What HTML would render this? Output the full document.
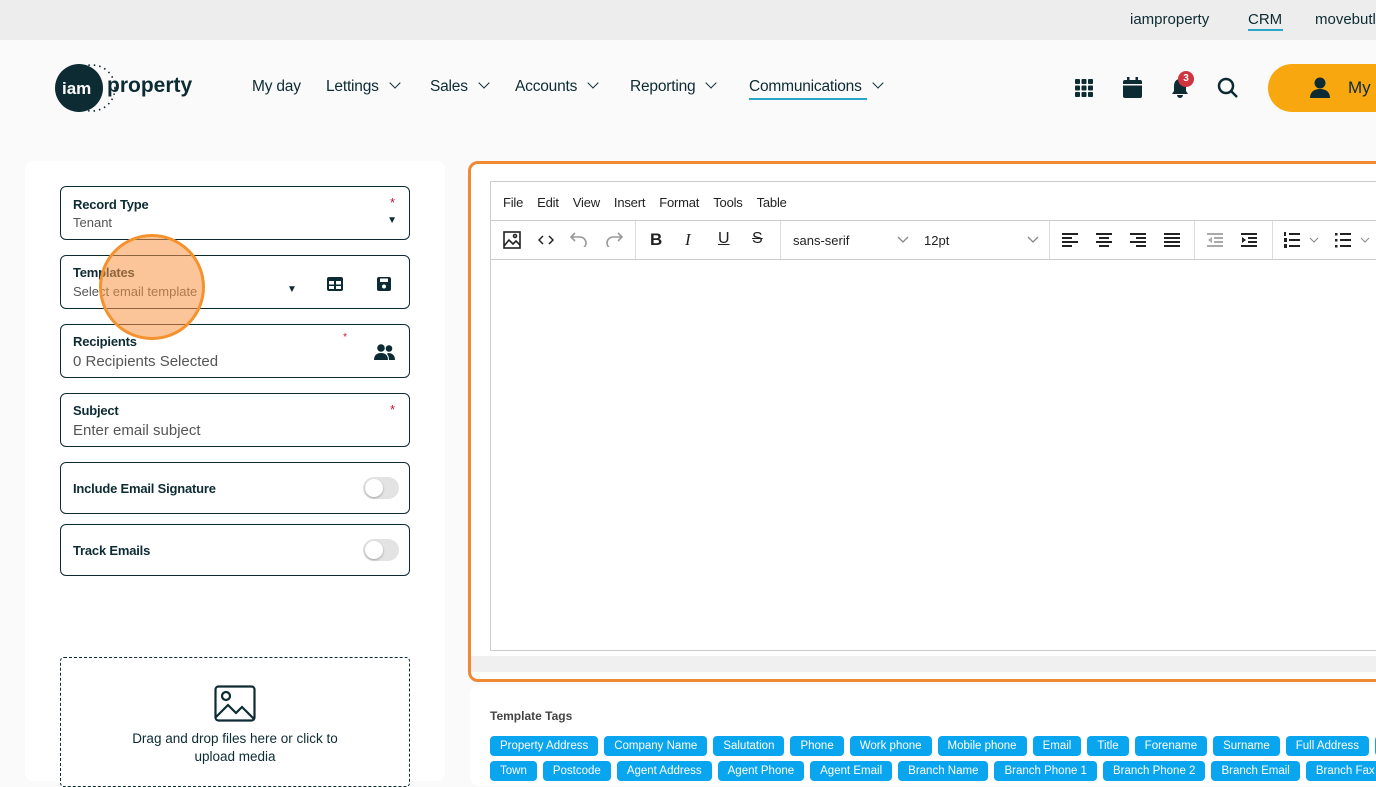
<!DOCTYPE html><html><head><meta charset="utf-8"><style>
*{box-sizing:border-box;margin:0;padding:0}
body{width:1376px;height:769px;overflow:hidden;background:#fafafa;font-family:"Liberation Sans",sans-serif;color:#0d2b33;position:relative}
.abs{position:absolute}
.top{left:0;top:0;width:1376px;height:40px;background:#ededed;font-size:15px}
.nav{top:78px;font-size:15.5px;color:#0d2b33;letter-spacing:-0.2px}
.chev{display:inline-block;width:8px;height:8px;border-right:1.3px solid #0d2b33;border-bottom:1.3px solid #0d2b33;transform:rotate(45deg);margin-left:12px;position:relative;top:-4px}
.card{background:#fff;border-radius:8px}
.fld{position:absolute;left:60px;width:350px;border:1px solid #0d2b33;border-radius:6px;background:#fff}
.lab{position:absolute;left:12px;font-size:13px;font-weight:bold;color:#0d2b33;letter-spacing:-0.2px}
.val{position:absolute;left:12px;font-size:15px;color:#555}
.star{position:absolute;color:#c8102e;font-size:13px}
.tog{position:absolute;right:10px;width:36px;height:22px;border-radius:11px;background:#e3e3e3}
.tog:after{content:"";position:absolute;left:2px;top:2px;width:18px;height:18px;border-radius:50%;background:#fff;box-shadow:0 1px 2px rgba(0,0,0,.3)}
.menu span{margin-right:14px}
.tb{font-size:13px;color:#222}
.tag{display:inline-block;background:#0aa5ef;color:#fff;font-size:11.5px;letter-spacing:0;border-radius:4px;height:20px;line-height:20px;padding:0 10px;margin-right:6px;white-space:nowrap}
</style></head><body>
<div class="abs top">
<span class="abs" style="left:1130px;top:11px">iamproperty</span>
<span class="abs" style="left:1248px;top:11px">CRM</span>
<div class="abs" style="left:1248px;top:29px;width:35px;height:2px;background:#2aa6c9"></div>
<span class="abs" style="left:1315px;top:11px">movebutler</span>
</div>
<svg class="abs" style="left:55px;top:62px" width="80" height="52"><circle cx="37" cy="26" r="23" fill="none" stroke="#0d2b33" stroke-width="1.6" stroke-dasharray="1.5 4"/><circle cx="24" cy="26" r="24" fill="#0d2b33"/><text x="7" y="32" fill="#fff" font-size="17" font-family="Liberation Sans" font-weight="bold">iam</text></svg>
<div class="abs" style="left:107px;top:74px;font-size:21px;font-weight:bold;color:#0d2b33">property</div>
<div class="abs nav" style="left:252px">My day</div>
<div class="abs nav" style="left:326px">Lettings<i class="chev"></i></div>
<div class="abs nav" style="left:430px">Sales<i class="chev"></i></div>
<div class="abs nav" style="left:515px">Accounts<i class="chev"></i></div>
<div class="abs nav" style="left:630px">Reporting<i class="chev"></i></div>
<div class="abs nav" style="left:749px">Communications<i class="chev"></i></div>
<div class="abs" style="left:749px;top:98px;width:118px;height:2px;background:#2aa6c9"></div>
<svg class="abs" style="left:1075px;top:79px" width="18" height="18" fill="#0d2b33"><rect x="0" y="0" width="5" height="5" rx="1"/><rect x="6.5" y="0" width="5" height="5" rx="1"/><rect x="13" y="0" width="5" height="5" rx="1"/><rect x="0" y="6.5" width="5" height="5" rx="1"/><rect x="6.5" y="6.5" width="5" height="5" rx="1"/><rect x="13" y="6.5" width="5" height="5" rx="1"/><rect x="0" y="13" width="5" height="5" rx="1"/><rect x="6.5" y="13" width="5" height="5" rx="1"/><rect x="13" y="13" width="5" height="5" rx="1"/></svg>
<svg class="abs" style="left:1123px;top:77px" width="19" height="21" fill="#0d2b33"><rect x="0" y="3" width="19" height="18" rx="2"/><rect x="4" y="0" width="2.5" height="5"/><rect x="12.5" y="0" width="2.5" height="5"/><rect x="0" y="7" width="19" height="1.5" fill="#fafafa"/></svg>
<svg class="abs" style="left:1170px;top:76px" width="22" height="23" fill="#0d2b33"><path d="M10 3c-4 0-6 3-6 7v5l-2 3h16l-2-3v-5c0-4-2-7-6-7zM7 19a3 3 0 006 0z"/></svg>
<div class="abs" style="left:1178px;top:71px;width:16px;height:16px;border-radius:50%;background:#d0343f;color:#fff;font-size:10px;font-weight:bold;text-align:center;line-height:16px">3</div>
<svg class="abs" style="left:1217px;top:77px" width="22" height="22" fill="none" stroke="#0d2b33" stroke-width="2.5"><circle cx="9" cy="9" r="7"/><path d="M14 14l6 6"/></svg>
<div class="abs" style="left:1268px;top:64px;width:140px;height:48px;border-radius:24px;background:#f9a70f"></div>
<svg class="abs" style="left:1310px;top:77px" width="20" height="21" fill="#0d2b33"><circle cx="10" cy="6" r="5.5"/><path d="M0 21c0-6 4-9 10-9s10 3 10 9z"/></svg>
<div class="abs" style="left:1348px;top:78px;font-size:17px;color:#0d2b33">My</div>

<div class="abs card" style="left:25px;top:161px;width:420px;height:620px"></div>
<div class="fld" style="top:186px;height:54px"><div class="lab" style="top:10px">Record Type</div><div class="val" style="top:28px;font-size:13px">Tenant</div><span class="star" style="right:14px;top:8px">*</span><span class="abs" style="right:12px;top:28px;font-size:10px">▼</span></div>
<div class="fld" style="top:255px;height:54px"><div class="lab" style="top:9px">Templates</div><div class="val" style="top:28px;font-size:13px">Select email template</div><span class="abs" style="left:226px;top:28px;font-size:10px">▼</span>
<svg class="abs" style="left:266px;top:21px" width="16" height="14"><rect x="0" y="0" width="16" height="14" rx="2" fill="#0d2b33"/><rect x="2" y="4" width="5" height="3.5" fill="#fff"/><rect x="9" y="4" width="5" height="3.5" fill="#fff"/><rect x="2" y="9" width="5" height="3" fill="#fff"/><rect x="9" y="9" width="5" height="3" fill="#fff"/></svg>
<svg class="abs" style="left:316px;top:21px" width="14" height="14"><rect width="14" height="14" rx="2" fill="#0d2b33"/><rect x="3" y="1.5" width="8" height="3.5" fill="#fff"/><circle cx="7" cy="9.5" r="2" fill="#fff"/></svg></div>
<div class="fld" style="top:324px;height:54px"><div class="lab" style="top:9px">Recipients</div><div class="val" style="top:28px">0 Recipients Selected</div><span class="star" style="right:62px;top:7px;font-size:10px">*</span>
<svg class="abs" style="left:313px;top:19px" width="21" height="16" fill="#0d2b33"><circle cx="7" cy="4" r="3.8"/><circle cx="15" cy="4.5" r="3.3"/><path d="M0 16c0-5 3-7 7-7s7 2 7 7z"/><path d="M14 9c4 0 7 2 7 7h-6c0-3-1-5-2-6z"/></svg></div>
<div class="fld" style="top:393px;height:54px"><div class="lab" style="top:9px">Subject</div><div class="val" style="top:28px">Enter email subject</div><span class="star" style="right:14px;top:8px">*</span></div>
<div class="fld" style="top:462px;height:52px"><div class="lab" style="top:18px">Include Email Signature</div><div class="tog" style="top:14px"></div></div>
<div class="fld" style="top:524px;height:52px"><div class="lab" style="top:18px">Track Emails</div><div class="tog" style="top:14px"></div></div>
<div class="abs" style="left:60px;top:657px;width:350px;height:130px;border:1px dashed #0d2b33;border-radius:4px;background:#fff;text-align:center;font-size:13.5px;color:#0d2b33;padding-top:72px;line-height:18px">Drag and drop files here or click to<br>upload media</div>
<svg class="abs" style="left:214px;top:685px" width="42" height="37" fill="none" stroke="#0d2b33" stroke-width="2.2"><rect x="1.5" y="1.5" width="39" height="34" rx="3"/><circle cx="12" cy="11" r="4"/><path d="M2 32l12-12 8 8 6-6 12 12"/></svg>
<div class="abs" style="left:99px;top:234px;width:106px;height:106px;border-radius:50%;background:rgba(247,150,70,.55);border:3px solid #f3922e"></div>

<div class="abs card" style="left:468px;top:161px;width:920px;height:521px;border:3px solid #ef8a33;border-radius:10px;background:#fff"></div>
<div class="abs" style="left:471px;top:656px;width:910px;height:16px;background:#f0f0f0"></div>
<div class="abs" style="left:490px;top:181px;width:900px;height:470px;background:#fff;border:1px solid #ccc"></div>
<div class="abs menu" style="left:503px;top:195px;font-size:13px;color:#222;letter-spacing:-0.2px"><span>File</span><span>Edit</span><span>View</span><span>Insert</span><span>Format</span><span>Tools</span><span>Table</span></div>
<div class="abs" style="left:491px;top:220px;width:900px;height:1px;background:#ccc"></div>
<div class="abs" style="left:491px;top:259px;width:900px;height:1px;background:#ccc"></div>
<div class="abs" style="left:635px;top:221px;width:1px;height:38px;background:#ddd"></div>
<div class="abs" style="left:780px;top:221px;width:1px;height:38px;background:#ddd"></div>
<div class="abs" style="left:1049px;top:221px;width:1px;height:38px;background:#ddd"></div>
<div class="abs" style="left:1194px;top:221px;width:1px;height:38px;background:#ddd"></div>
<div class="abs" style="left:1272px;top:221px;width:1px;height:38px;background:#ddd"></div>
<svg class="abs" style="left:503px;top:231px" width="18" height="18" fill="none" stroke="#222" stroke-width="1.6"><rect x="1" y="1" width="16" height="16"/><path d="M1 15l5-6 4 4 3-3 4 4"/><circle cx="12" cy="5" r="1.5"/></svg>
<svg class="abs" style="left:538px;top:235px" width="16" height="10" fill="none" stroke="#222" stroke-width="1.5"><path d="M5 1L1 5l4 4M11 1l4 4-4 4"/></svg>
<svg class="abs" style="left:570px;top:231px" width="18" height="16" fill="none" stroke="#999" stroke-width="1.6"><path d="M5 2L1 6l4 4M1 6h9a6 6 0 010 12"/></svg>
<svg class="abs" style="left:605px;top:231px" width="18" height="16" fill="none" stroke="#999" stroke-width="1.6"><path d="M13 2l4 4-4 4M17 6H8a6 6 0 000 12"/></svg>
<div class="abs tb" style="left:650px;top:230px;font-size:17px;font-weight:bold">B</div>
<div class="abs tb" style="left:685px;top:230px;font-size:17px;font-family:'Liberation Serif';font-style:italic">I</div>
<div class="abs tb" style="left:718px;top:230px;font-size:16px;text-decoration:underline">U</div>
<div class="abs tb" style="left:752px;top:230px;font-size:16px;text-decoration:line-through">S</div>
<div class="abs tb" style="left:793px;top:233px">sans-serif</div>
<svg class="abs" style="left:897px;top:236px" width="12" height="8" fill="none" stroke="#888" stroke-width="1.3"><path d="M1 1l5 5 5-5"/></svg>
<div class="abs tb" style="left:924px;top:233px">12pt</div>
<svg class="abs" style="left:1027px;top:236px" width="12" height="8" fill="none" stroke="#888" stroke-width="1.3"><path d="M1 1l5 5 5-5"/></svg>
<svg class="abs" style="left:1062px;top:232px" width="120" height="16" fill="#222"><g><rect x="0" y="1" width="16" height="2"/><rect x="0" y="5" width="10" height="2"/><rect x="0" y="9" width="16" height="2"/><rect x="0" y="13" width="10" height="2"/></g><g transform="translate(34)"><rect x="0" y="1" width="16" height="2"/><rect x="3" y="5" width="10" height="2"/><rect x="0" y="9" width="16" height="2"/><rect x="3" y="13" width="10" height="2"/></g><g transform="translate(68)"><rect x="0" y="1" width="16" height="2"/><rect x="6" y="5" width="10" height="2"/><rect x="0" y="9" width="16" height="2"/><rect x="6" y="13" width="10" height="2"/></g><g transform="translate(102)"><rect x="0" y="1" width="16" height="2"/><rect x="0" y="5" width="16" height="2"/><rect x="0" y="9" width="16" height="2"/><rect x="0" y="13" width="16" height="2"/></g></svg>
<svg class="abs" style="left:1207px;top:232px" width="54" height="16"><g fill="#aaa"><rect x="0" y="1" width="16" height="2"/><rect x="7" y="5" width="9" height="2"/><rect x="7" y="9" width="9" height="2"/><rect x="0" y="13" width="16" height="2"/><path d="M5 5l-4 3 4 3z"/></g><g fill="#222" transform="translate(34)"><rect x="0" y="1" width="16" height="2"/><rect x="7" y="5" width="9" height="2"/><rect x="7" y="9" width="9" height="2"/><rect x="0" y="13" width="16" height="2"/><path d="M1 5l4 3-4 3z"/></g></svg>
<svg class="abs" style="left:1284px;top:232px" width="92" height="16" fill="#222"><rect x="5" y="1" width="11" height="2"/><rect x="5" y="7" width="11" height="2"/><rect x="5" y="13" width="11" height="2"/><rect x="0" y="0" width="2" height="4"/><rect x="0" y="6" width="3" height="4"/><rect x="0" y="12" width="3" height="4"/><path d="M26 6l4 4 4-4" stroke="#888" fill="none"/><g transform="translate(51)"><rect x="5" y="1" width="11" height="2"/><rect x="5" y="7" width="11" height="2"/><rect x="5" y="13" width="11" height="2"/><rect x="0" y="1" width="2.5" height="2.5"/><rect x="0" y="7" width="2.5" height="2.5"/><rect x="0" y="13" width="2.5" height="2.5"/><path d="M26 6l4 4 4-4" stroke="#888" fill="none"/></g></svg>

<div class="abs card" style="left:470px;top:685px;width:920px;height:100px"></div>
<div class="abs" style="left:490px;top:709px;font-size:12px;font-weight:bold;color:#444">Template Tags</div>
<div class="abs" style="left:490px;top:736px;width:900px;white-space:nowrap"><span class="tag">Property Address</span><span class="tag">Company Name</span><span class="tag">Salutation</span><span class="tag">Phone</span><span class="tag">Work phone</span><span class="tag">Mobile phone</span><span class="tag">Email</span><span class="tag">Title</span><span class="tag">Forename</span><span class="tag">Surname</span><span class="tag">Full Address</span><span class="tag">Address</span></div>
<div class="abs" style="left:490px;top:761px;width:900px;white-space:nowrap"><span class="tag">Town</span><span class="tag">Postcode</span><span class="tag">Agent Address</span><span class="tag">Agent Phone</span><span class="tag">Agent Email</span><span class="tag">Branch Name</span><span class="tag">Branch Phone 1</span><span class="tag">Branch Phone 2</span><span class="tag">Branch Email</span><span class="tag">Branch Fax</span></div>
</body></html>
